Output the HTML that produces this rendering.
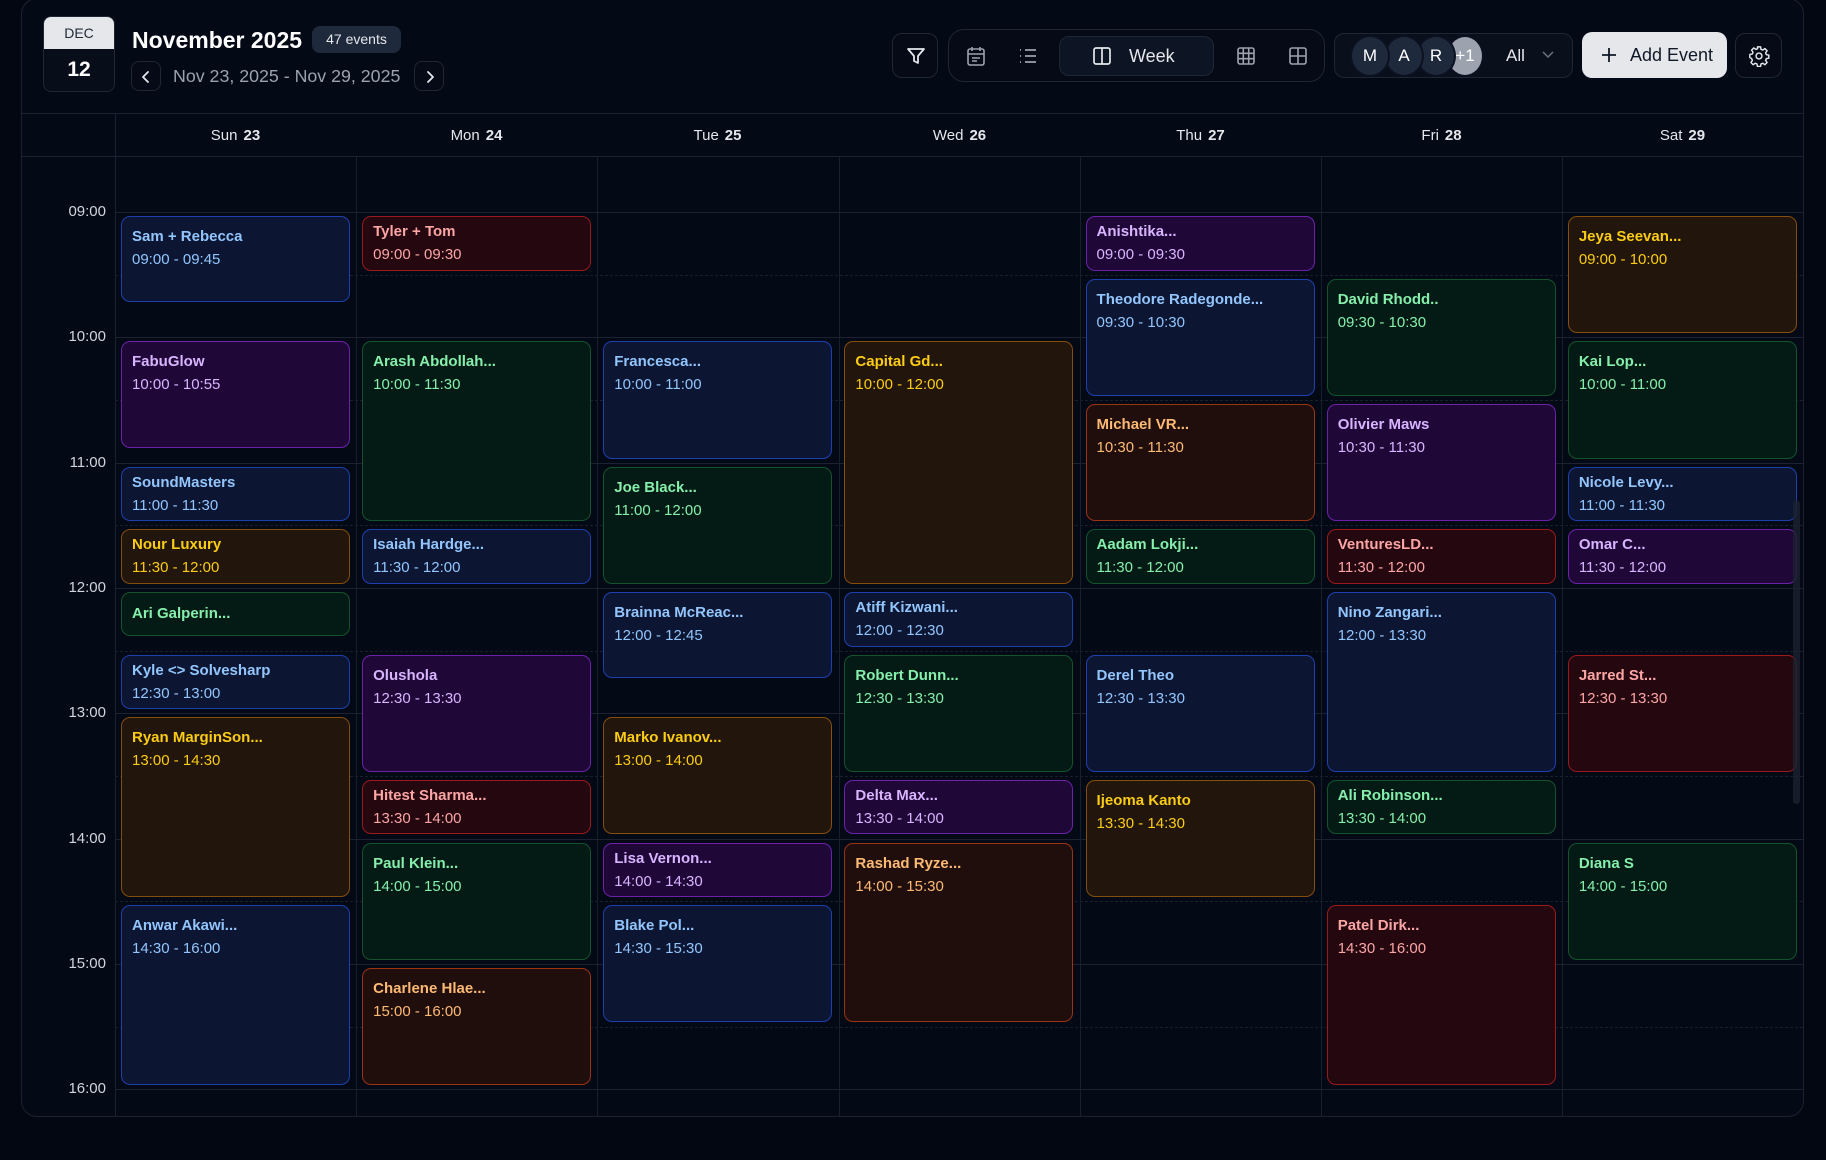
<!DOCTYPE html>
<html><head><meta charset="utf-8">
<style>
*{box-sizing:border-box;margin:0;padding:0}
html,body{width:1826px;height:1160px;background:#030712;overflow:hidden;font-family:"Liberation Sans",sans-serif;color:#e5e7eb}
.card{position:absolute;left:21px;top:-2px;width:1783px;height:1119px;border:1px solid #1b2130;border-radius:16px;background:#040916;overflow:hidden}
.abs{position:absolute}
.hl{position:absolute;left:115px;width:1688px;height:0;border-top:1px solid #1c2231}
.hd{position:absolute;left:115px;width:1688px;height:0;border-top:1px dashed #1a1f2c}
.vl{position:absolute;top:156px;height:961px;width:0;border-left:1px solid #1a1f2c}
.tl{position:absolute;left:40px;width:66px;text-align:right;font-size:15px;color:#d1d5db;line-height:18px}
.dh{position:absolute;top:126px;width:241px;text-align:center;font-size:15px;color:#e5e7eb;line-height:20px}
.dh b{margin-left:6px}
.ev{position:absolute;left:calc(121px + var(--d)*241.14px);top:calc(216px + var(--s)*125.3px);height:calc((var(--e) - var(--s))*125.3px - 8px);width:229px;border:1.5px solid;border-radius:9px;padding:10px 0 0 10px;overflow:hidden}
.ev.sh{padding-top:5px}
.ev .t{font-size:15px;font-weight:bold;line-height:20px;white-space:nowrap}
.ev .m{font-size:15px;line-height:20px;margin-top:3px}
.bl{background:#0c1632;border-color:#1e40af;color:#93c5fd}
.rd{background:#24070f;border-color:#991b1b;color:#fca5a5}
.pu{background:#1f0838;border-color:#6b21a8;color:#d8b4fe}
.gr{background:#041a14;border-color:#14532d;color:#86efac}
.am{background:#22150c;border-color:#854d0e;color:#facc15}
.or{background:#200e0c;border-color:#9a3412;color:#fdba74}
.btn{position:absolute;border:1px solid #1f2634;border-radius:10px;background:#050a16}
.ico{position:absolute}
.av{position:absolute;top:35px;width:40px;height:42px;border-radius:50%;background:#1e293b;border:2px solid #0b1120;color:#fff;font-size:17px;text-align:center;line-height:38px}
</style></head><body>
<div class="card">
</div>
<div class="abs" style="left:43px;top:16px;width:72px;height:76px;border:1px solid #1f2634;border-radius:8px;overflow:hidden;background:#080d1a">
 <div style="height:32px;background:#e5e7eb;color:#1f2937;font-size:14px;text-align:center;line-height:32px">DEC</div>
 <div style="color:#fff;font-weight:bold;font-size:21px;text-align:center;line-height:42px">12</div>
</div>
<div class="abs" style="left:132px;top:26px;font-size:23px;font-weight:bold;color:#fff;line-height:28px">November 2025</div>
<div class="abs" style="left:312px;top:26px;width:89px;height:27px;border-radius:8px;background:#1e293b;color:#e5e7eb;font-size:14px;text-align:center;line-height:27px">47 events</div>
<div class="btn" style="left:131px;top:61px;width:30px;height:30px;border-radius:8px"><svg class="ico" style="left:8px;top:8px" width="12" height="14" viewBox="0 0 12 14"><path d="M8 2L3 7l5 5" fill="none" stroke="#e5e7eb" stroke-width="1.8" stroke-linecap="round" stroke-linejoin="round"/></svg></div>
<div class="abs" style="left:173px;top:65px;font-size:17.8px;color:#9ca3af;line-height:22px">Nov 23, 2025 - Nov 29, 2025</div>
<div class="btn" style="left:414px;top:61px;width:30px;height:30px;border-radius:8px"><svg class="ico" style="left:9px;top:8px" width="12" height="14" viewBox="0 0 12 14"><path d="M4 2l5 5-5 5" fill="none" stroke="#e5e7eb" stroke-width="1.8" stroke-linecap="round" stroke-linejoin="round"/></svg></div>
<div class="btn" style="left:892px;top:33px;width:46px;height:45px"><svg class="ico" style="left:12px;top:11px" width="22" height="22" viewBox="0 0 22 22"><path d="M3 4h16l-6 7v7l-4-2v-5z" fill="none" stroke="#e5e7eb" stroke-width="1.8" stroke-linejoin="round"/></svg></div>
<div class="btn" style="left:948px;top:29px;width:377px;height:53px;border-radius:16px"></div>
<svg class="ico" style="left:966px;top:45px" width="20" height="22" viewBox="0 0 20 22"><rect x="2" y="4" width="16" height="16" rx="2" fill="none" stroke="#9ca3af" stroke-width="1.6"/><path d="M6 2v4M14 2v4M2 9h16M6 13h8M6 16h5" stroke="#9ca3af" stroke-width="1.6"/></svg>
<svg class="ico" style="left:1018px;top:46px" width="20" height="20" viewBox="0 0 20 20"><path d="M7 4h11M7 10h11M7 16h11" stroke="#9ca3af" stroke-width="1.7"/><path d="M2 4h1M2 10h1M2 16h1" stroke="#9ca3af" stroke-width="1.7"/></svg>
<div class="btn" style="left:1059px;top:36px;width:155px;height:40px;background:#0d1424;border-radius:10px"></div>
<svg class="ico" style="left:1092px;top:46px" width="20" height="20" viewBox="0 0 20 20"><rect x="2" y="2" width="16" height="16" rx="2" fill="none" stroke="#e5e7eb" stroke-width="1.7"/><path d="M10 2v16" stroke="#e5e7eb" stroke-width="1.7"/></svg>
<div class="abs" style="left:1129px;top:45px;font-size:18px;color:#e5e7eb;line-height:22px">Week</div>
<svg class="ico" style="left:1236px;top:46px" width="20" height="20" viewBox="0 0 20 20"><rect x="2" y="2" width="16" height="16" rx="2" fill="none" stroke="#9ca3af" stroke-width="1.6"/><path d="M7.3 2v16M12.7 2v16M2 7.3h16M2 12.7h16" stroke="#9ca3af" stroke-width="1.6"/></svg>
<svg class="ico" style="left:1288px;top:46px" width="20" height="20" viewBox="0 0 20 20"><rect x="2" y="2" width="16" height="16" rx="2" fill="none" stroke="#9ca3af" stroke-width="1.6"/><path d="M10 2v16M2 10h16" stroke="#9ca3af" stroke-width="1.6"/></svg>
<div class="btn" style="left:1334px;top:33px;width:239px;height:45px;background:#0a0f1c"></div>
<div class="av" style="left:1350px;z-index:4">M</div>
<div class="av" style="left:1384px;z-index:3">A</div>
<div class="av" style="left:1416px;z-index:2">R</div>
<div class="av" style="left:1446px;z-index:1;background:#9ca3af;width:38px">+1</div>
<div class="abs" style="left:1506px;top:45px;font-size:17px;color:#e5e7eb;line-height:22px">All</div>
<svg class="ico" style="left:1541px;top:50px" width="14" height="10" viewBox="0 0 14 10"><path d="M2 2l5 5 5-5" fill="none" stroke="#6b7280" stroke-width="1.5"/></svg>
<div class="abs" style="left:1582px;top:32px;width:145px;height:46px;border-radius:10px;background:#e5e7eb"></div>
<svg class="ico" style="left:1600px;top:46px" width="18" height="18" viewBox="0 0 18 18"><path d="M9 2v14M2 9h14" stroke="#111827" stroke-width="1.8"/></svg>
<div class="abs" style="left:1630px;top:44px;font-size:18px;color:#111827;line-height:22px">Add Event</div>
<div class="btn" style="left:1735px;top:33px;width:47px;height:45px"><svg class="ico" style="left:12px;top:11px" width="22" height="22" viewBox="0 0 24 24"><path d="M10.3 2h3.4l.5 2.7 1.9.8 2.3-1.6 2.4 2.4-1.6 2.3.8 1.9 2.7.5v3.4l-2.7.5-.8 1.9 1.6 2.3-2.4 2.4-2.3-1.6-1.9.8-.5 2.7h-3.4l-.5-2.7-1.9-.8-2.3 1.6-2.4-2.4 1.6-2.3-.8-1.9L2 13.7v-3.4l2.7-.5.8-1.9-1.6-2.3 2.4-2.4 2.3 1.6 1.9-.8z" fill="none" stroke="#e5e7eb" stroke-width="1.6" stroke-linejoin="round"/><circle cx="12" cy="12" r="3.2" fill="none" stroke="#e5e7eb" stroke-width="1.6"/></svg></div>
<div class="abs" style="left:21px;top:113px;width:1783px;border-top:1px solid #1c2231"></div>
<div class="abs" style="left:21px;top:156px;width:1783px;border-top:1px solid #1c2231"></div>
<div class="abs" style="left:115px;top:113px;height:1004px;border-left:1px solid #1c2231"></div>
<div class="vl" style="left:356px"></div><div class="vl" style="left:597px"></div><div class="vl" style="left:839px"></div><div class="vl" style="left:1080px"></div><div class="vl" style="left:1321px"></div><div class="vl" style="left:1562px"></div>
<div class="hl" style="top:212px"></div><div class="hl" style="top:337px"></div><div class="hl" style="top:463px"></div><div class="hl" style="top:588px"></div><div class="hl" style="top:713px"></div><div class="hl" style="top:839px"></div><div class="hl" style="top:964px"></div><div class="hl" style="top:1089px"></div>
<div class="hd" style="top:275px"></div><div class="hd" style="top:400px"></div><div class="hd" style="top:525px"></div><div class="hd" style="top:651px"></div><div class="hd" style="top:776px"></div><div class="hd" style="top:901px"></div><div class="hd" style="top:1027px"></div>
<div class="tl" style="top:203px">09:00</div><div class="tl" style="top:328px">10:00</div><div class="tl" style="top:454px">11:00</div><div class="tl" style="top:579px">12:00</div><div class="tl" style="top:704px">13:00</div><div class="tl" style="top:830px">14:00</div><div class="tl" style="top:955px">15:00</div><div class="tl" style="top:1080px">16:00</div>
<div class="dh" style="left:115px">Sun<b>23</b></div><div class="dh" style="left:356px">Mon<b>24</b></div><div class="dh" style="left:597px">Tue<b>25</b></div><div class="dh" style="left:839px">Wed<b>26</b></div><div class="dh" style="left:1080px">Thu<b>27</b></div><div class="dh" style="left:1321px">Fri<b>28</b></div><div class="dh" style="left:1562px">Sat<b>29</b></div>
<div class="ev bl" style="--d:0;--s:0;--e:.75"><div class="t">Sam + Rebecca</div><div class="m">09:00 - 09:45</div></div>
<div class="ev pu" style="--d:0;--s:1;--e:1.917"><div class="t">FabuGlow</div><div class="m">10:00 - 10:55</div></div>
<div class="ev bl sh" style="--d:0;--s:2;--e:2.5"><div class="t">SoundMasters</div><div class="m">11:00 - 11:30</div></div>
<div class="ev am sh" style="--d:0;--s:2.5;--e:3"><div class="t">Nour Luxury</div><div class="m">11:30 - 12:00</div></div>
<div class="ev gr" style="--d:0;--s:3;--e:3.417;padding:0 0 0 10px;display:flex;align-items:center"><div class="t">Ari Galperin...</div></div>
<div class="ev bl sh" style="--d:0;--s:3.5;--e:4"><div class="t">Kyle &lt;&gt; Solvesharp</div><div class="m">12:30 - 13:00</div></div>
<div class="ev am" style="--d:0;--s:4;--e:5.5"><div class="t">Ryan MarginSon...</div><div class="m">13:00 - 14:30</div></div>
<div class="ev bl" style="--d:0;--s:5.5;--e:7"><div class="t">Anwar Akawi...</div><div class="m">14:30 - 16:00</div></div>
<div class="ev rd sh" style="--d:1;--s:0;--e:.5"><div class="t">Tyler + Tom</div><div class="m">09:00 - 09:30</div></div>
<div class="ev gr" style="--d:1;--s:1;--e:2.5"><div class="t">Arash Abdollah...</div><div class="m">10:00 - 11:30</div></div>
<div class="ev bl sh" style="--d:1;--s:2.5;--e:3"><div class="t">Isaiah Hardge...</div><div class="m">11:30 - 12:00</div></div>
<div class="ev pu" style="--d:1;--s:3.5;--e:4.5"><div class="t">Olushola</div><div class="m">12:30 - 13:30</div></div>
<div class="ev rd sh" style="--d:1;--s:4.5;--e:5"><div class="t">Hitest Sharma...</div><div class="m">13:30 - 14:00</div></div>
<div class="ev gr" style="--d:1;--s:5;--e:6"><div class="t">Paul Klein...</div><div class="m">14:00 - 15:00</div></div>
<div class="ev or" style="--d:1;--s:6;--e:7"><div class="t">Charlene Hlae...</div><div class="m">15:00 - 16:00</div></div>
<div class="ev bl" style="--d:2;--s:1;--e:2"><div class="t">Francesca...</div><div class="m">10:00 - 11:00</div></div>
<div class="ev gr" style="--d:2;--s:2;--e:3"><div class="t">Joe Black...</div><div class="m">11:00 - 12:00</div></div>
<div class="ev bl" style="--d:2;--s:3;--e:3.75"><div class="t">Brainna McReac...</div><div class="m">12:00 - 12:45</div></div>
<div class="ev am" style="--d:2;--s:4;--e:5"><div class="t">Marko Ivanov...</div><div class="m">13:00 - 14:00</div></div>
<div class="ev pu sh" style="--d:2;--s:5;--e:5.5"><div class="t">Lisa Vernon...</div><div class="m">14:00 - 14:30</div></div>
<div class="ev bl" style="--d:2;--s:5.5;--e:6.5"><div class="t">Blake Pol...</div><div class="m">14:30 - 15:30</div></div>
<div class="ev am" style="--d:3;--s:1;--e:3"><div class="t">Capital Gd...</div><div class="m">10:00 - 12:00</div></div>
<div class="ev bl sh" style="--d:3;--s:3;--e:3.5"><div class="t">Atiff Kizwani...</div><div class="m">12:00 - 12:30</div></div>
<div class="ev gr" style="--d:3;--s:3.5;--e:4.5"><div class="t">Robert Dunn...</div><div class="m">12:30 - 13:30</div></div>
<div class="ev pu sh" style="--d:3;--s:4.5;--e:5"><div class="t">Delta Max...</div><div class="m">13:30 - 14:00</div></div>
<div class="ev or" style="--d:3;--s:5;--e:6.5"><div class="t">Rashad Ryze...</div><div class="m">14:00 - 15:30</div></div>
<div class="ev pu sh" style="--d:4;--s:0;--e:.5"><div class="t">Anishtika...</div><div class="m">09:00 - 09:30</div></div>
<div class="ev bl" style="--d:4;--s:.5;--e:1.5"><div class="t">Theodore Radegonde...</div><div class="m">09:30 - 10:30</div></div>
<div class="ev or" style="--d:4;--s:1.5;--e:2.5"><div class="t">Michael VR...</div><div class="m">10:30 - 11:30</div></div>
<div class="ev gr sh" style="--d:4;--s:2.5;--e:3"><div class="t">Aadam Lokji...</div><div class="m">11:30 - 12:00</div></div>
<div class="ev bl" style="--d:4;--s:3.5;--e:4.5"><div class="t">Derel Theo</div><div class="m">12:30 - 13:30</div></div>
<div class="ev am" style="--d:4;--s:4.5;--e:5.5"><div class="t">Ijeoma Kanto</div><div class="m">13:30 - 14:30</div></div>
<div class="ev gr" style="--d:5;--s:.5;--e:1.5"><div class="t">David Rhodd..</div><div class="m">09:30 - 10:30</div></div>
<div class="ev pu" style="--d:5;--s:1.5;--e:2.5"><div class="t">Olivier Maws</div><div class="m">10:30 - 11:30</div></div>
<div class="ev rd sh" style="--d:5;--s:2.5;--e:3"><div class="t">VenturesLD...</div><div class="m">11:30 - 12:00</div></div>
<div class="ev bl" style="--d:5;--s:3;--e:4.5"><div class="t">Nino Zangari...</div><div class="m">12:00 - 13:30</div></div>
<div class="ev gr sh" style="--d:5;--s:4.5;--e:5"><div class="t">Ali Robinson...</div><div class="m">13:30 - 14:00</div></div>
<div class="ev rd" style="--d:5;--s:5.5;--e:7"><div class="t">Patel Dirk...</div><div class="m">14:30 - 16:00</div></div>
<div class="ev am" style="--d:6;--s:0;--e:1"><div class="t">Jeya Seevan...</div><div class="m">09:00 - 10:00</div></div>
<div class="ev gr" style="--d:6;--s:1;--e:2"><div class="t">Kai Lop...</div><div class="m">10:00 - 11:00</div></div>
<div class="ev bl sh" style="--d:6;--s:2;--e:2.5"><div class="t">Nicole Levy...</div><div class="m">11:00 - 11:30</div></div>
<div class="ev pu sh" style="--d:6;--s:2.5;--e:3"><div class="t">Omar C...</div><div class="m">11:30 - 12:00</div></div>
<div class="ev rd" style="--d:6;--s:3.5;--e:4.5"><div class="t">Jarred St...</div><div class="m">12:30 - 13:30</div></div>
<div class="ev gr" style="--d:6;--s:5;--e:6"><div class="t">Diana S</div><div class="m">14:00 - 15:00</div></div>
<div class="abs" style="left:1793px;top:500px;width:7px;height:304px;border-radius:4px;background:#1c2230;opacity:.8"></div>
</body></html>
